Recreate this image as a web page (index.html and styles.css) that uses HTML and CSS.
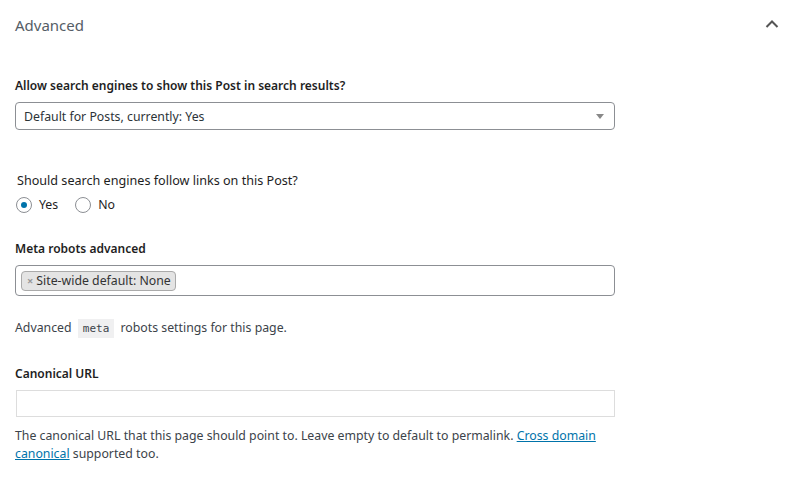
FILE: index.html
```html
<!DOCTYPE html>
<html lang="en">
<head>
<meta charset="utf-8">
<title>Advanced</title>
<link rel="stylesheet" href="styles.css">
</head>
<body>
<div class="panel">
  <div class="panel-header">
    <h2 class="panel-title">Advanced</h2>
    <svg class="chevron" width="14" height="10" viewBox="0 0 14 10"><path d="M1.5 8 L7 2.5 L12.5 8" fill="none" stroke="#555" stroke-width="2"/></svg>
  </div>
  <div class="panel-body">
    <label class="field-label first">Allow search engines to show this Post in search results?</label>
    <div class="select">
      <span>Default for Posts, currently: Yes</span>
      <span class="select-arrow"></span>
    </div>

    <div class="fieldset">
      <div class="legend">Should search engines follow links on this Post?</div>
      <div class="radios">
        <span class="radio checked"></span><span class="radio-text">Yes</span>
        <span class="radio"></span><span class="radio-text">No</span>
      </div>
    </div>

    <label class="field-label meta-label">Meta robots advanced</label>
    <div class="multi">
      <span class="tag"><span class="tag-x">×</span>Site-wide default: None</span>
    </div>
    <p class="desc meta-desc">Advanced <code>meta</code> robots settings for this page.</p>

    <label class="field-label canon-label">Canonical URL</label>
    <div class="text-input"></div>
    <p class="desc canon-desc">The canonical URL that this page should point to. Leave empty to default to permalink. <a href="#">Cross domain</a><br><a href="#">canonical</a> supported too.</p>
  </div>
</div>
</body>
</html>
```
FILE: styles.css
```css
html, body {
  margin: 0;
  padding: 0;
  background: #fff;
}
body {
  font-family: "Noto Sans", "Open Sans", sans-serif;
  font-size: 12.3px;
  color: #1e1e1e;
}
.panel-header {
  height: 50px;
  display: flex;
  align-items: center;
  justify-content: space-between;
  padding: 0 17px 0 15px;
}
.panel-title {
  margin: 0;
  font-size: 15px;
  font-weight: 400;
  color: #555d66;
}
.chevron {
  display: block;
  margin-top: -2px;
}
.panel-body {
  padding: 0 15px;
  width: 600px;
}
.field-label {
  display: block;
  font-size: 12px;
  font-weight: 600;
  line-height: 18px;
  color: #1e1e1e;
}
.first {
  margin-top: 27px;
}
.select {
  margin-top: 7px;
  height: 28px;
  box-sizing: border-box;
  border: 1px solid #8c8f94;
  border-radius: 4px;
  display: flex;
  align-items: center;
  justify-content: space-between;
  padding: 0 8px 0 8px;
  color: #2c3338;
}
.select-arrow {
  width: 0;
  height: 0;
  border-left: 4px solid transparent;
  border-right: 4px solid transparent;
  border-top: 5px solid #888;
  margin-right: 2px;
}
.fieldset {
  margin-top: 42px;
  padding-left: 2px;
}
.legend {
  line-height: 18px;
  font-size: 12.6px;
}
.radios {
  margin-top: 7px;
  display: flex;
  align-items: center;
  height: 16px;
  margin-left: -1px;
}
.radio {
  width: 16px;
  height: 16px;
  box-sizing: border-box;
  border: 1px solid #8c8f94;
  border-radius: 50%;
  display: flex;
  align-items: center;
  justify-content: center;
}
.radio.checked::after {
  content: "";
  width: 6px;
  height: 6px;
  border-radius: 50%;
  background: #0073aa;
}
.radio-text {
  margin: 0 17px 0 7px;
  line-height: 16px;
}
.meta-label {
  margin-top: 27px;
}
.multi {
  margin-top: 7px;
  height: 31px;
  box-sizing: border-box;
  border: 1px solid #8c8f94;
  border-radius: 4px;
  display: flex;
  align-items: center;
  padding: 0 5px;
}
.tag {
  display: inline-flex;
  align-items: center;
  height: 20px;
  box-sizing: border-box;
  border: 1px solid #aaa;
  border-radius: 4px;
  background: #e4e4e4;
  padding: 0 4px 0 5px;
  color: #333;
}
.tag-x {
  color: #999;
  font-weight: 700;
  font-size: 11px;
  margin-right: 3px;
}
.desc {
  margin: 0;
  line-height: 18px;
  color: #3c434a;
}
.meta-desc {
  margin-top: 23px;
}
code {
  font-family: "DejaVu Sans Mono", "Liberation Mono", monospace;
  font-size: 11px;
  background: #f0f0f1;
  padding: 3px 5px;
  margin: 0 3px;
}
.canon-label {
  margin-top: 27px;
}
.text-input {
  margin-top: 7px;
  margin-left: 1px;
  height: 27px;
  box-sizing: border-box;
  border: 1px solid #ddd;
}
.canon-desc {
  margin-top: 10px;
}
.desc a {
  color: #0073aa;
  text-decoration: underline;
}
```
